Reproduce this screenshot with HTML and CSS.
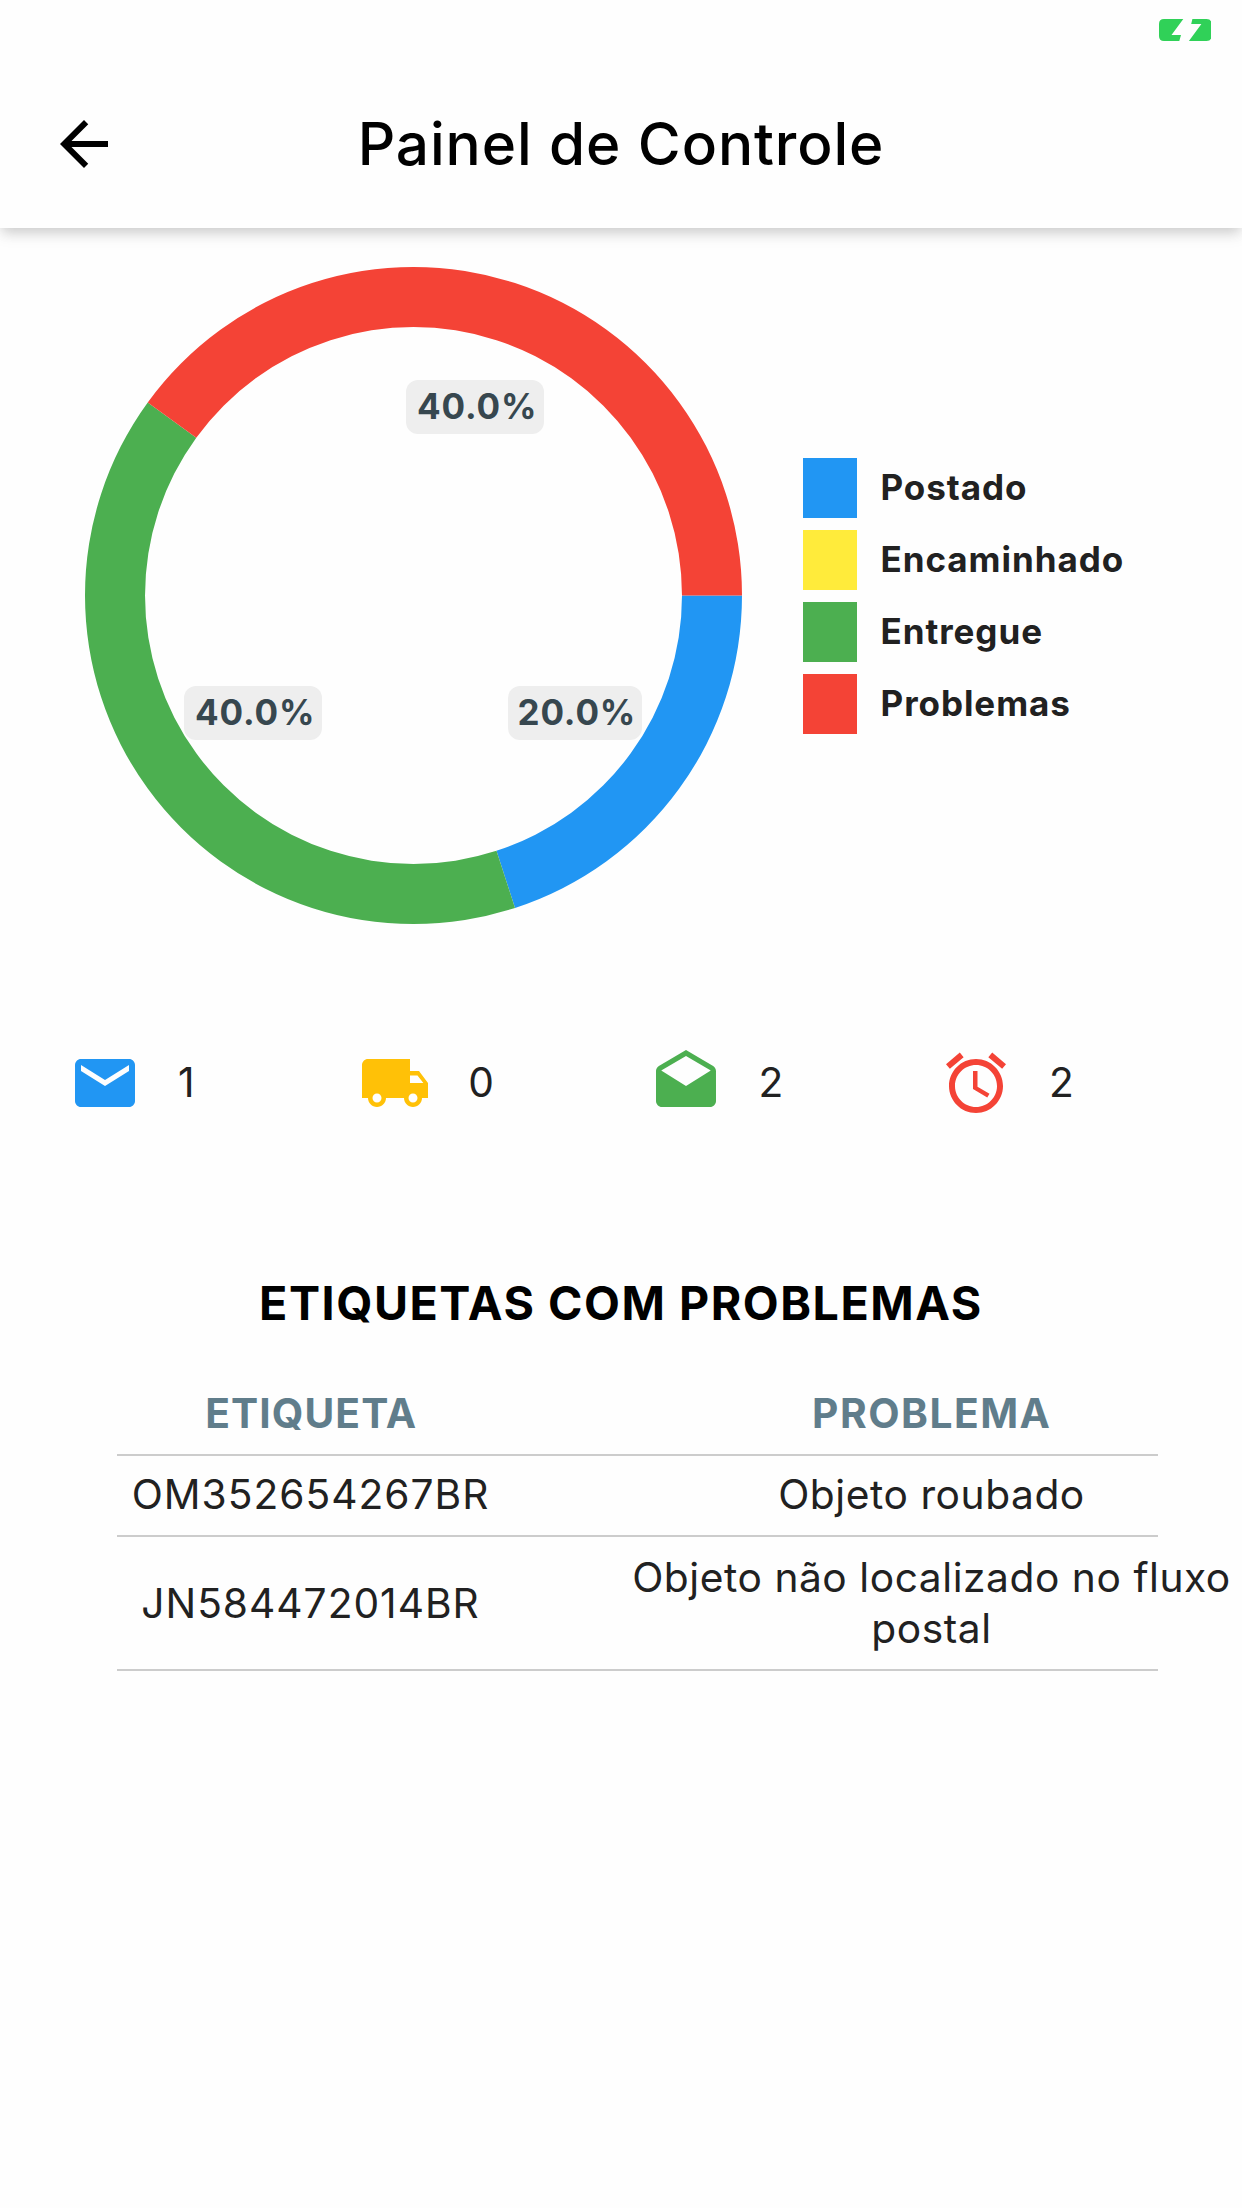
FILE: index.html
```html
<!DOCTYPE html>
<html lang="pt-BR">
<head>
<meta charset="utf-8">
<title>Painel de Controle</title>
<link rel="stylesheet" href="styles.css">
</head>
<body>
<header class="app-bar">
  <div class="status-bar">
    <svg class="battery" viewBox="0 0 52.5 22" aria-hidden="true">
      <path d="M5 0H24.3L12.5 16H22L20.3 22H5Q0 22 0 17V5Q0 0 5 0Z"/>
      <path d="M33.4 0H47.5Q52.5 0 52.5 5V17Q52.5 22 47.5 22H29.9L42.4 5H32.2Z"/>
    </svg>
  </div>
  <div class="toolbar">
    <svg class="back" viewBox="0 0 24 24" role="img" aria-label="Voltar"><path d="M20 11H7.83l5.59-5.59L12 4l-8 8 8 8 1.41-1.41L7.83 13H20v-2z"/></svg>
    <h1 class="title">Painel de Controle</h1>
  </div>
</header>
<main>
  <section class="chart">
    <div class="donut">
      <svg class="ring" viewBox="-328.5 -328.5 657 657" aria-hidden="true">
        <path class="fill-blue" d="M328.5 0A328.5 328.5 0 0 1 101.51 312.42L82.97 255.34A268.5 268.5 0 0 0 268.5 0Z"/>
        <path class="fill-green" d="M101.51 312.42A328.5 328.5 0 0 1 -265.76 -193.09L-217.22 -157.82A268.5 268.5 0 0 0 82.97 255.34Z"/>
        <path class="fill-red" d="M-265.76 -193.09A328.5 328.5 0 0 1 328.5 0H268.5A268.5 268.5 0 0 0 -217.22 -157.82Z"/>
      </svg>
      <span class="badge badge-red">40.0%</span>
      <span class="badge badge-green">40.0%</span>
      <span class="badge badge-blue">20.0%</span>
    </div>
    <ul class="legend">
      <li><i class="swatch bg-blue"></i><span>Postado</span></li>
      <li><i class="swatch bg-yellow"></i><span>Encaminhado</span></li>
      <li><i class="swatch bg-green"></i><span>Entregue</span></li>
      <li><i class="swatch bg-red"></i><span>Problemas</span></li>
    </ul>
  </section>
  <section class="stats">
    <div class="stat"><svg class="fill-blue" viewBox="0 0 24 24"><path d="M20 4H4c-1.1 0-1.99.9-1.99 2L2 18c0 1.1.9 2 2 2h16c1.1 0 2-.9 2-2V6c0-1.1-.9-2-2-2zm0 4l-8 5-8-5V6l8 5 8-5v2z"/></svg><span>1</span></div>
    <div class="stat"><svg class="fill-amber" viewBox="0 0 24 24"><path d="M20 8h-3V4H3c-1.1 0-2 .9-2 2v11h2c0 1.66 1.34 3 3 3s3-1.34 3-3h6c0 1.66 1.34 3 3 3s3-1.34 3-3h2v-5l-3-4zM6 18.5c-.83 0-1.5-.67-1.5-1.5s.67-1.5 1.5-1.5 1.5.67 1.5 1.5-.67 1.5-1.5 1.5zm13.5-9l1.96 2.5H17V9.5h2.5zm-1.5 9c-.83 0-1.5-.67-1.5-1.5s.67-1.5 1.5-1.5 1.5.67 1.5 1.5-.67 1.5-1.5 1.5z"/></svg><span>0</span></div>
    <div class="stat"><svg class="fill-green" viewBox="0 0 24 24"><path d="M21.99 8c0-.72-.37-1.35-.94-1.7L12 1 2.95 6.3C2.38 6.65 2 7.28 2 8v10c0 1.1.9 2 2 2h16c1.1 0 2-.9 2-2l-.01-10zM12 13L3.74 7.84 12 3l8.26 4.84L12 13z"/></svg><span>2</span></div>
    <div class="stat"><svg class="fill-red" viewBox="0 0 24 24"><path d="M22 5.72l-4.6-3.86-1.29 1.53 4.6 3.86L22 5.72zM7.88 3.39L6.6 1.86 2 5.71l1.29 1.53 4.59-3.85zM12.5 8H11v6l4.75 2.85.75-1.23-4-2.37V8zM12 4c-4.97 0-9 4.03-9 9s4.02 9 9 9c4.97 0 9-4.03 9-9s-4.03-9-9-9zm0 16c-3.87 0-7-3.13-7-7s3.13-7 7-7 7 3.13 7 7-3.13 7-7 7z"/></svg><span>2</span></div>
  </section>
  <h2 class="section-title">ETIQUETAS COM PROBLEMAS</h2>
  <section class="table">
    <div class="row head"><div class="th-tag">ETIQUETA</div><div class="th-problem">PROBLEMA</div></div>
    <hr class="divider">
    <div class="row"><div class="tag">OM352654267BR</div><div class="problem">Objeto roubado</div></div>
    <hr class="divider">
    <div class="row tall"><div class="tag">JN584472014BR</div><div class="problem">Objeto não localizado no fluxo postal</div></div>
    <hr class="divider">
  </section>
</main>
</body>
</html>
```
FILE: styles.css
```css
* { box-sizing: border-box; }

body {
  margin: 0;
  min-height: 2208px;
  background: #fefefe;
  color: #212121;
  font-family: Inter, "Liberation Sans", sans-serif;
  font-size: 40.7px;
}

h1, h2, ul { margin: 0; padding: 0; }

.app-bar {
  height: 228px;
  background: #fefefe;
  box-shadow: 0 6px 12px -3px rgba(0, 0, 0, .13), 0 6px 15px rgba(0, 0, 0, .1);
}
.status-bar { display: flex; justify-content: flex-end; height: 60px; padding: 19px 31px 0 0; }
.battery { width: 52.5px; height: 22px; fill: #30d158; }

.toolbar {
  display: grid;
  grid-template-columns: 120px 1fr 120px;
  align-items: center;
  height: 168px;
}
.back { width: 72px; height: 72px; margin-left: 48px; }
.title { color: #000; font-size: 58.5px; font-weight: 500; letter-spacing: .9px; line-height: 70px; text-align: center; }

.chart { display: flex; align-items: center; padding: 39px 0 0 85px; }
.donut { position: relative; width: 657px; height: 657px; }
.ring { display: block; width: 657px; height: 657px; }

.badge {
  position: absolute;
  height: 54px;
  padding-left: 11px;
  border-radius: 12px;
  background: #eee;
  color: #37474f;
  font-size: 35px;
  font-weight: 700;
  letter-spacing: .87px;
  line-height: 53px;
}
.badge-red { left: 321px; top: 112.5px; width: 138px; }
.badge-green { left: 99px; top: 418.5px; width: 138px; }
.badge-blue { left: 422.5px; top: 418.5px; width: 134.5px; padding-left: 10px; }

.legend {
  display: grid;
  gap: 12px;
  margin-left: 60.5px;
  list-style: none;
  font-size: 35px;
  font-weight: 700;
  letter-spacing: .95px;
}
.legend li { display: flex; align-items: center; gap: 24px; height: 60px; }
.legend span { line-height: 60px; padding-bottom: 2px; }
.swatch { width: 54px; height: 60px; }

.bg-blue { background: #2196f3; }
.bg-yellow { background: #ffeb3b; }
.bg-green { background: #4caf50; }
.bg-red { background: #f44336; }
.fill-blue { fill: #2196f3; }
.fill-amber { fill: #ffc107; }
.fill-green { fill: #4caf50; }
.fill-red { fill: #f44336; }

.stats {
  display: grid;
  grid-template-columns: repeat(4, 290.3px);
  padding: 123px 0 0 69px;
}
.stat { display: flex; align-items: center; gap: 37px; height: 72px; line-height: 70px; }
.stat svg { width: 72px; height: 72px; }

.section-title {
  margin-top: 154px;
  color: #000;
  font-size: 46.6px;
  font-weight: 700;
  letter-spacing: 1.53px;
  line-height: 60px;
  text-align: center;
}

.table { margin-top: 38px; }
.row {
  display: grid;
  grid-template-columns: 1fr 1fr;
  align-items: center;
  height: 79px;
  padding-bottom: 2px;
  line-height: 51px;
  text-align: center;
}
.row.head { height: 83px; padding: 2px 0 0 1px; color: #607d8b; font-weight: 700; }
.row.tall { height: 132px; padding: 0; }
.th-tag { letter-spacing: 1.1px; }
.th-problem { letter-spacing: 1.5px; }
.tag { letter-spacing: 1px; }
.problem { letter-spacing: .55px; }
.divider { height: 2px; margin: 0 84px 0 117px; border: 0; background: #ccc; }
```
